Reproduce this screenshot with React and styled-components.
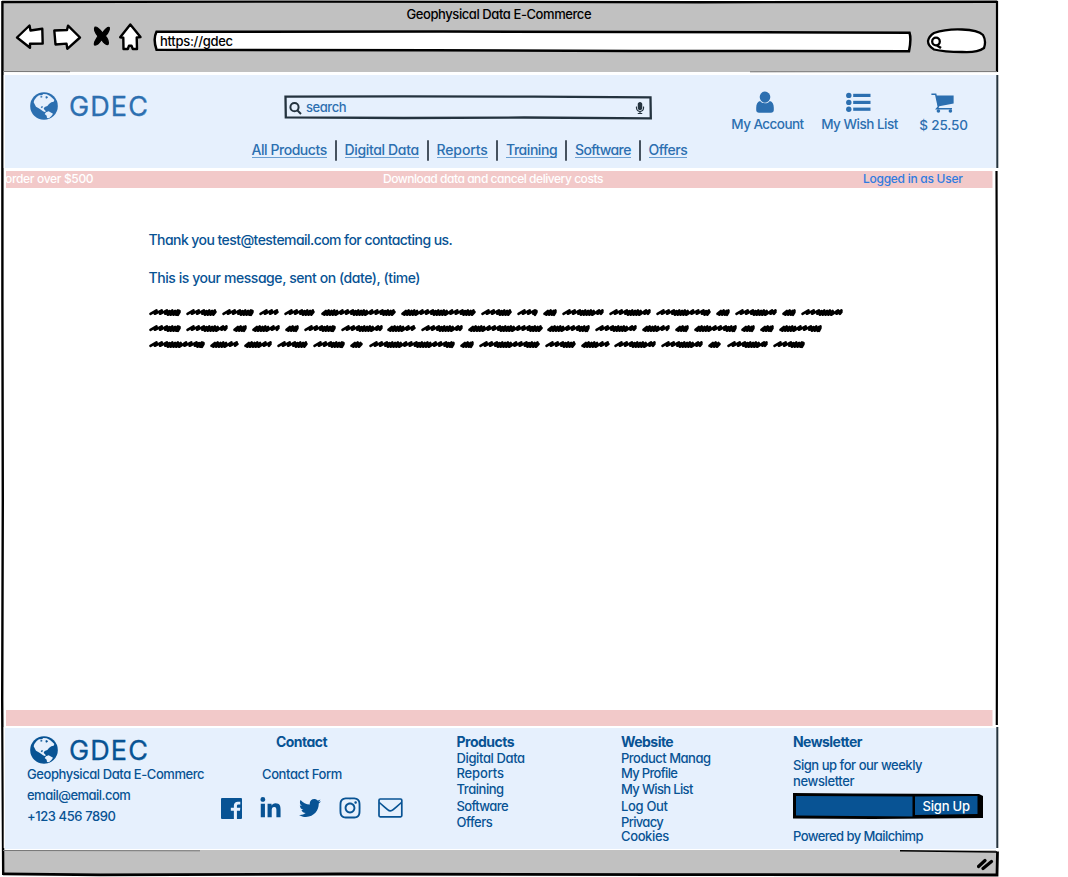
import React from 'react';
import styled, { createGlobalStyle } from 'styled-components';
import { FaLinkedinIn, FaTwitter, FaInstagram, FaMicrophone } from 'react-icons/fa';

const BLUE = '#2c6fb0';
const NAVY = '#085394';
const SLATE = '#24333f';

const GlobalStyle = createGlobalStyle`
  * { box-sizing: border-box; }
  body {
    margin: 0;
    background: #fff;
    overflow: hidden;
    font-family: Inter, "Noto Sans", sans-serif;
    font-feature-settings: "cv11";
    font-weight: 500;
  }
  svg { display: block; flex: none; }
`;

const Window = styled.div`
  position: relative;
  width: 1000px;
  height: 877px;
  padding: 2px 4px 3px 3px;
  display: flex;
  flex-direction: column;
`;

const FrameLines = styled.svg`
  position: absolute;
  left: 0;
  top: 0;
  pointer-events: none;
`;

const Text = styled.span`
  font-size: ${(p) => p.$size || 13}px;
  letter-spacing: ${(p) => p.$track || 0}px;
  line-height: ${(p) => p.$line || 16}px;
  white-space: nowrap;
`;

/* Browser chrome */
const TitleBar = styled.div`
  height: 70px;
  background: #c1c1c1;
  display: flex;
  flex-direction: column;
  color: #000;
`;

const WindowTitle = styled.div`
  display: flex;
  padding: 4px 0 0 403.5px;
  height: 21px;
`;

const Toolbar = styled.div`
  display: flex;
  height: 49px;
`;

const NavIcons = styled.svg`
  width: 130px;
  height: 34px;
  margin: -3px 0 0 12px;
`;

const AddressBar = styled.div`
  position: relative;
  width: 759px;
  height: 24px;
  margin: 7px 0 0 8px;
  padding: 4px 0 0 7px;
  display: flex;
`;

const Backdrop = styled.svg`
  position: absolute;
  inset: 0;
  z-index: -1;
`;

const Layer = styled.div`
  position: relative;
  z-index: 0;
  display: flex;
`;

const SearchPill = styled.svg`
  width: 62px;
  height: 26px;
  margin: 5px 0 0 14px;
`;

/* Page header */
const Header = styled.header`
  height: 93px;
  margin: 3px 0 0 2px;
  background: #e6f0fd;
  color: ${BLUE};
  display: grid;
  grid-template-columns: 246px 480px 1fr;
`;

const Brand = styled.div`
  display: flex;
  align-items: center;
  gap: 11px;
  height: 28px;
`;

const HeaderBrand = styled(Brand)`
  margin: 17px 0 0 25px;
`;

const BrandName = styled.span`
  margin-top: 2px;
  font-size: 27px;
  font-weight: 400;
  letter-spacing: 1.1px;
  line-height: 28px;
  -webkit-text-stroke: 0.3px currentColor;
`;

const Middle = styled.div`
  display: flex;
  flex-direction: column;
`;

const SearchBox = styled(Layer)`
  width: 369px;
  height: 25px;
  margin: 20px 0 0 33px;
  padding: 0 7px 0 5px;
  align-items: center;
`;

const SearchText = styled(Text)`
  flex: 1;
  margin: -1px 0 0 4px;
`;

const Nav = styled.nav`
  display: flex;
  align-items: center;
  gap: 8px;
  height: 22px;
  margin: 19px 0 0 0.5px;
`;

const NavLink = styled.a`
  width: ${(p) => p.$w}px;
  font-size: 14px;
  line-height: 16px;
  height: 16px;
  letter-spacing: ${(p) => p.$track}px;
  border-bottom: 1px solid #6a9fd2;
  white-space: nowrap;
`;

const Divider = styled.i`
  width: 2px;
  height: 21px;
  border-radius: 1px;
  background: #46525f;
`;

const Actions = styled.div`
  display: flex;
  padding-top: 16px;
`;

const Action = styled.div`
  width: ${(p) => p.$w}px;
  margin-right: ${(p) => p.$gap || 0}px;
  display: flex;
  flex-direction: column;
  align-items: center;

  & > svg { margin-right: ${(p) => p.$shift || 0}px; }
`;

/* Announcement strips */
const Strip = styled.div`
  height: ${(p) => p.$h}px;
  margin: ${(p) => p.$top}px 3.5px 0 3px;
  background: #f2c9c9;
  color: #fff;
  display: flex;
  flex: none;
  clip-path: inset(0 0 0 -1px);
`;

const StripText = styled(Text)`
  width: ${(p) => p.$w}px;
  margin-left: ${(p) => p.$indent || 0}px;
  line-height: 16px;
  color: ${(p) => p.$color || '#fff'};
`;

/* Message body */
const Content = styled.main`
  flex: 1;
  padding: 44px 0 0 145.5px;
  color: ${NAVY};
  display: flex;
  flex-direction: column;
`;

const Message = styled(Text)`
  margin-bottom: ${(p) => p.$after}px;
`;

/* Footer */
const Footer = styled.footer`
  height: 121px;
  margin: 2px 0 0 2px;
  padding: 6px 0 0 22px;
  background: #e6f0fd;
  color: ${NAVY};
  display: grid;
  grid-template-columns: 194px 235.5px 164.5px 172px 1fr;
  flex: none;
`;

const Column = styled.div`
  display: flex;
  flex-direction: column;
  align-items: flex-start;
`;

const FooterBrand = styled(Brand)`
  margin: 2px 0 0 3px;
`;

const Heading = styled(Text)`
  font-size: 14px;
  font-weight: 700;
  line-height: 16px;
  margin-left: ${(p) => p.$indent || 0}px;
`;

const FormLink = styled(Text)`
  margin: 16px 0 0 41px;
`;

const Social = styled.div`
  display: flex;
  align-items: center;
  height: 22px;
  margin-top: 15px;
`;

const Glyph = styled.span`
  display: flex;
  margin-right: ${(p) => p.$gap || 0}px;
`;

const SignUpRow = styled(Layer)`
  width: 191px;
  height: 27px;
  margin-top: 10px;
  padding: 5px 0 0 129.5px;
  color: #fff;
`;

const Powered = styled(Text)`
  margin-top: 8px;
`;

const StatusBar = styled.div`
  height: 24px;
  margin-top: 1px;
  background: #c1c1c1;
  display: flex;
  justify-content: flex-end;
  align-items: center;
  padding: 3px 1px 0 0;
  flex: none;
`;

const Globe = () => (
  <svg width="28" height="28" viewBox="0 0 84 84">
    <circle cx="42" cy="42" r="41.5" fill="currentColor" />
    <path
      fill="#e6f0fd"
      d="M27 10L20 15 13 24 11 31 14 37 18 44 26 49 33 53 39 58 44 60 48 58 44 54 41 50 44 45 52 42 57 36 64 31 71 29 73 24 66 17 60 12 50 7 40 6 36 10ZM48 61L56 58 69 65 65 71 57 79 51 78 50 71 44 66Z"
    />
    <path fill="currentColor" d="M30 14L35 12 38 15 33 17ZM46 14L51 12 54 17 48 20ZM32 46L36 42 39 44 36 49Z" />
  </svg>
);

const UserIcon = () => (
  <svg width="18" height="22" viewBox="0 0 18 22" fill="currentColor">
    <ellipse cx="9" cy="6.100" rx="5.300" ry="5.600" />
    <path d="M4.200 9.900C1.600 10.600.2 13 .2 16.800V19C.2 20.800 1.400 21.700 3 21.700H15C16.600 21.700 17.800 20.800 17.800 19V16.800C17.800 13 16.400 10.600 13.800 9.900 12.800 11.600 11.200 12.200 9 12.200S5.200 11.600 4.200 9.900Z" />
  </svg>
);

const ListIcon = () => (
  <svg width="25" height="22" viewBox="0 0 25 22" fill="currentColor">
    {[4.400, 11.400, 18.200].map((y) => (
      <g key={y}>
        <circle cx="2.800" cy={y} r="2.700" />
        <rect x="7.200" y={y - 1.6} width="17.300" height="3.200" />
      </g>
    ))}
  </svg>
);

const CartIcon = () => (
  <svg width="23" height="22" viewBox="0 0 23 22">
    <path d="M.4 3.300H4.700L7.400 15.800 5.700 17.700H21" fill="none" stroke="currentColor" strokeWidth="1.500" />
    <path d="M5 4.600H22.600V12.600L7 15.500Z" fill="currentColor" />
    <circle cx="7.400" cy="20" r="1.800" fill="currentColor" />
    <circle cx="19.400" cy="20" r="1.800" fill="currentColor" />
  </svg>
);

const FacebookIcon = () => (
  <svg width="21" height="21" viewBox="0 0 62 62">
    <rect width="62" height="62" rx="3" fill="currentColor" />
    <path fill="#e6f0fd" d="M38 62V38H29V29H38V22C38 15 43 11 50 11H57V19H52C48 19 47 21 47 24V29H57L56 38H47V62Z" />
  </svg>
);

const MailIcon = () => (
  <svg width="25" height="20" viewBox="0 0 25 20" fill="none" stroke="currentColor" strokeWidth="1.700">
    <rect x="1" y="1" width="22.800" height="17.800" rx="1.200" />
    <path d="M1.300 4.500C4.500 7.500 7 9.300 9.600 11.700 11.400 13.300 13.400 13.300 15.200 11.700 17.800 9.300 20.300 7.500 23.500 4.500" />
  </svg>
);

/* Each word is [start, end] along the line. */
const LINES = [
  [[0, 32], [37, 68], [73, 105], [110, 130], [135, 166], [172, 247], [252, 327], [332, 363], [368, 389], [394, 408], [413, 455], [460, 502], [507, 562], [567, 581], [586, 628], [633, 647], [652, 694]],
  [[0, 32], [37, 79], [84, 98], [103, 131], [136, 150], [155, 187], [192, 234], [238, 267], [272, 314], [319, 394], [398, 441], [446, 488], [493, 521], [526, 540], [545, 588], [592, 606], [611, 625], [630, 673]],
  [[0, 56], [61, 90], [95, 123], [128, 159], [164, 196], [201, 214], [220, 306], [311, 325], [330, 391], [396, 427], [432, 461], [465, 507], [512, 554], [559, 572], [578, 619], [624, 656]],
];

const DENSE_WIDTHS = [13, 14, 28, 29, 43, 75];

const scribble = ([from, to]) => {
  const end = to - 1.5;
  let x = from + 1.5;
  let d = `M${x} 5.8`;
  let i = DENSE_WIDTHS.includes(to - from) ? 3 : 0;
  while (x < end - 2) {
    const tight = i % 8 > 2;
    const top = Math.min(x + (tight ? 3.4 : 6), end);
    d += `L${top} ${tight ? 2.4 + (i % 2) * 0.6 : 2.4}L${Math.max(top - 1.6, x + 0.5)} ${tight ? 6.8 : 5.8}`;
    x = Math.max(top - (tight ? 0.6 : 0.8), x + 1);
    i += 1;
  }
  return `${d}L${end} 4`;
};

const Scribbles = () => (
  <svg width="696" height="44" fill="none" stroke="#000" strokeWidth="2.600" strokeLinecap="round" strokeLinejoin="round">
    {LINES.map((words, row) => (
      <g key={row} transform={`translate(0 ${row * 16})`}>
        {words.map((w) => (
          <path key={w[0]} d={scribble(w)} />
        ))}
      </g>
    ))}
  </svg>
);

const LINKS = [
  ['All Products', 75, -0.45],
  ['Digital Data', 74, -0.35],
  ['Reports', 51.5, -0.12],
  ['Training', 51, -0.45],
  ['Software', 55.5, -0.62],
  ['Offers', 38.5, -0.48],
];

const PRODUCTS = [
  ['Digital Data', 16, -0.38],
  ['Reports', 15, -0.15],
  ['Training', 17, -0.45],
  ['Software', 16, -0.62],
  ['Offers', 16, -0.48],
];

const WEBSITE = [
  ['Product Manag', 16, -0.5],
  ['My Profile', 15, -0.68],
  ['My Wish List', 17, -0.65],
  ['Log Out', 16, -0.32],
  ['Privacy', 16, -0.68],
  ['Cookies', 12, -0.38],
];

export default function App() {
  return (
    <Window>
      <GlobalStyle />
      <TitleBar>
        <WindowTitle>
          <Text $track={-0.42}>Geophysical Data E-Commerce</Text>
        </WindowTitle>
        <Toolbar>
          <NavIcons viewBox="15 20 130 34" fill="#fff" stroke="#000" strokeWidth="2.400" strokeLinejoin="round">
            <path d="M17 37.500L29.500 25.500 30.500 30.500 42.300 28.800 42.700 43.500 30 43.700 30 47.700Z" />
            <path d="M54.300 30.500L67 30 68 25.700 80 37.500 67.300 48.800 66.500 43.600 55.500 44.500Z" />
            <path d="M130.300 24.500L140.500 37 136.700 37.500 137 49 132.800 49 131.500 45.700 129 45.700 127.800 49 123.500 49 123.300 37.800 120.200 37.300Z" />
            <path d="M95 27C98 26.700 101 31 102.500 33 105 29.500 107.500 26.500 109.300 27.500 110 31 107 34 105.300 36 107.500 38.500 109 42 108 44.500 105 45 103 41.500 101.500 39.500 100 42 97.500 45.500 94.500 45 93.300 42.500 96.500 39 98 36 95.500 33 93.500 29.500 95 27Z" fill="#000" strokeWidth="1.200" />
          </NavIcons>
          <Layer>
            <AddressBar>
              <Backdrop width="759" height="24" fill="#fff" stroke="#000" strokeWidth="2.500">
                <path d="M3.500 1.700L290 1.600 480 2 756.500 2.700Q758.500 9 756 21.200L480 21 280 20.200 3.500 19.700Q-.2 9 3.500 1.700Z" />
              </Backdrop>
              <Text $track={-0.28} $line={14}>https://gdec</Text>
            </AddressBar>
          </Layer>
          <SearchPill viewBox="0 0 62 26" fill="#fff" stroke="#000" strokeWidth="2.300">
            <path d="M8 5Q20 .8 36 1.500 52 2 57 7 60.500 13 58 20 51 25 36 24 18 24 8 21.500 2 18 2 13 3 8 8 5Z" />
            <circle cx="10" cy="13.500" r="3.800" />
            <path d="M11 17.500L15 20" strokeWidth="2.500" />
          </SearchPill>
        </Toolbar>
      </TitleBar>

      <Header>
        <HeaderBrand>
          <Globe />
          <BrandName>GDEC</BrandName>
        </HeaderBrand>
        <Middle>
          <SearchBox>
            <Backdrop width="369" height="25" fill="none" stroke={SLATE} strokeWidth="2.300">
              <path d="M1.500 1.600L120 1.300 250 1.700 366.500 2.300 366.800 23.300 240 22.500 120 23 1.800 22.300Z" />
            </Backdrop>
            <svg width="13" height="14" viewBox="0 0 13 14" fill="none" stroke={SLATE} strokeWidth="2">
              <circle cx="5.500" cy="6.200" r="4.100" />
              <path d="M8.500 9.500L12 13" />
            </svg>
            <SearchText $track={-0.45}>search</SearchText>
            <FaMicrophone size={12} color={SLATE} />
          </SearchBox>
          <Nav>
            {LINKS.map(([label, w, track], i) => (
              <React.Fragment key={label}>
                {i > 0 && <Divider />}
                <NavLink $w={w} $track={track}>{label}</NavLink>
              </React.Fragment>
            ))}
          </Nav>
        </Middle>
        <Actions>
          <Action $w={73} $gap={17} $shift={6}>
            <UserIcon />
            <Text $size={13.5} $track={-0.55} $line={22}>My Account</Text>
          </Action>
          <Action $w={77} $gap={20.5} $shift={3}>
            <ListIcon />
            <Text $size={13.5} $track={-0.5} $line={22}>My Wish List</Text>
          </Action>
          <Action $w={50} $shift={2}>
            <CartIcon />
            <Text $size={13.5} $track={-0.15} $line={24}>$ 25.50</Text>
          </Action>
        </Actions>
      </Header>

      <Strip $h={17} $top={3}>
        <StripText $w={378} $indent={-1} $size={12} $track={-0.33}>order over $500</StripText>
        <StripText $w={480} $size={12} $track={-0.46}>Download data and cancel delivery costs</StripText>
        <StripText $w={110} $size={12} $track={-0.27} $color="#2f7be0">Logged in as User</StripText>
      </Strip>

      <Content>
        <Message $size={14} $track={-0.56} $after={22}>Thank you test@testemail.com for contacting us.</Message>
        <Message $size={14} $track={-0.43} $after={22}>This is your message, sent on (date), (time)</Message>
        <Scribbles />
      </Content>

      <Strip $h={16} $top={0} />
      <Footer>
        <Column>
          <FooterBrand>
            <Globe />
            <BrandName>GDEC</BrandName>
          </FooterBrand>
          <Text $track={-0.43} $line={21}>Geophysical Data E-Commerc</Text>
          <Text $track={-0.52} $line={21}>email@email.com</Text>
          <Text $track={-0.42} $line={21}>+123 456 7890</Text>
        </Column>
        <Column>
          <Heading $track={-0.55} $indent={55}>Contact</Heading>
          <FormLink $track={-0.4}>Contact Form</FormLink>
          <Social>
            <Glyph $gap={17}><FacebookIcon /></Glyph>
            <Glyph $gap={17}><FaLinkedinIn size={23} /></Glyph>
            <Glyph $gap={16.5}><FaTwitter size={22} /></Glyph>
            <Glyph $gap={16}><FaInstagram size={24} /></Glyph>
            <Glyph><MailIcon /></Glyph>
          </Social>
        </Column>
        <Column>
          <Heading $track={-0.5}>Products</Heading>
          {PRODUCTS.map(([label, line, track]) => (
            <Text key={label} $line={line} $track={track}>{label}</Text>
          ))}
        </Column>
        <Column>
          <Heading $track={-0.55}>Website</Heading>
          {WEBSITE.map(([label, line, track]) => (
            <Text key={label} $line={line} $track={track}>{label}</Text>
          ))}
        </Column>
        <Column>
          <Heading $track={-0.55}>Newsletter</Heading>
          <Text $track={-0.47} $line={30}>Sign up for our weekly</Text>
          <Text $track={-0.38} $line={3}>newsletter</Text>
          <SignUpRow>
            <Backdrop width="191" height="27">
              <path d="M0 0L60 .5 186 1 190 3 190 25 80 26 0 25.500Z" fill="#000" />
              <path d="M3 3L119.500 3.500 119.500 23.500 60 23 3 22.500ZM122 3.500L184.500 3 184.500 21 122 22Z" fill={NAVY} />
            </Backdrop>
            <Text $track={-0.2}>Sign Up</Text>
          </SignUpRow>
          <Powered $track={-0.57}>Powered by Mailchimp</Powered>
        </Column>
      </Footer>
      <StatusBar>
        <svg width="18" height="14" fill="none" stroke="#000" strokeWidth="3.200" strokeLinecap="round">
          <path d="M1.500 9.500L8 3.500M6 11.500L14.500 4.500" />
        </svg>
      </StatusBar>

      <FrameLines width="1000" height="877" fill="none" stroke="#000" strokeWidth="2.400">
        <path d="M2 2L300 1.600 700 2.200 997.300 1.800" />
        <path d="M2.400 1V300L2.800 500 2.200 700 3.200 875" />
        <path d="M997 1L997 72" strokeWidth="2.200" />
        <path d="M997.300 75V168M997.300 727V848" stroke={SLATE} strokeWidth="2" />
        <path d="M996.500 171L997.300 430 996.800 725" strokeWidth="2.200" />
        <path d="M3 873.800L100 874.800 340 874 660 874.600 997 875 997.500 851.500" strokeWidth="2.800" />
        <path d="M900 850.800L997 852" strokeWidth="1.500" />
        <path d="M3 71.500L70 71.700M750 71.800L997 71.600M3 850.500L200 850.800" stroke="#777" strokeWidth="1" />
        <path d="M4.300 75V168M4.300 727V848" stroke="#fff" strokeWidth="1.200" />
      </FrameLines>
    </Window>
  );
}
